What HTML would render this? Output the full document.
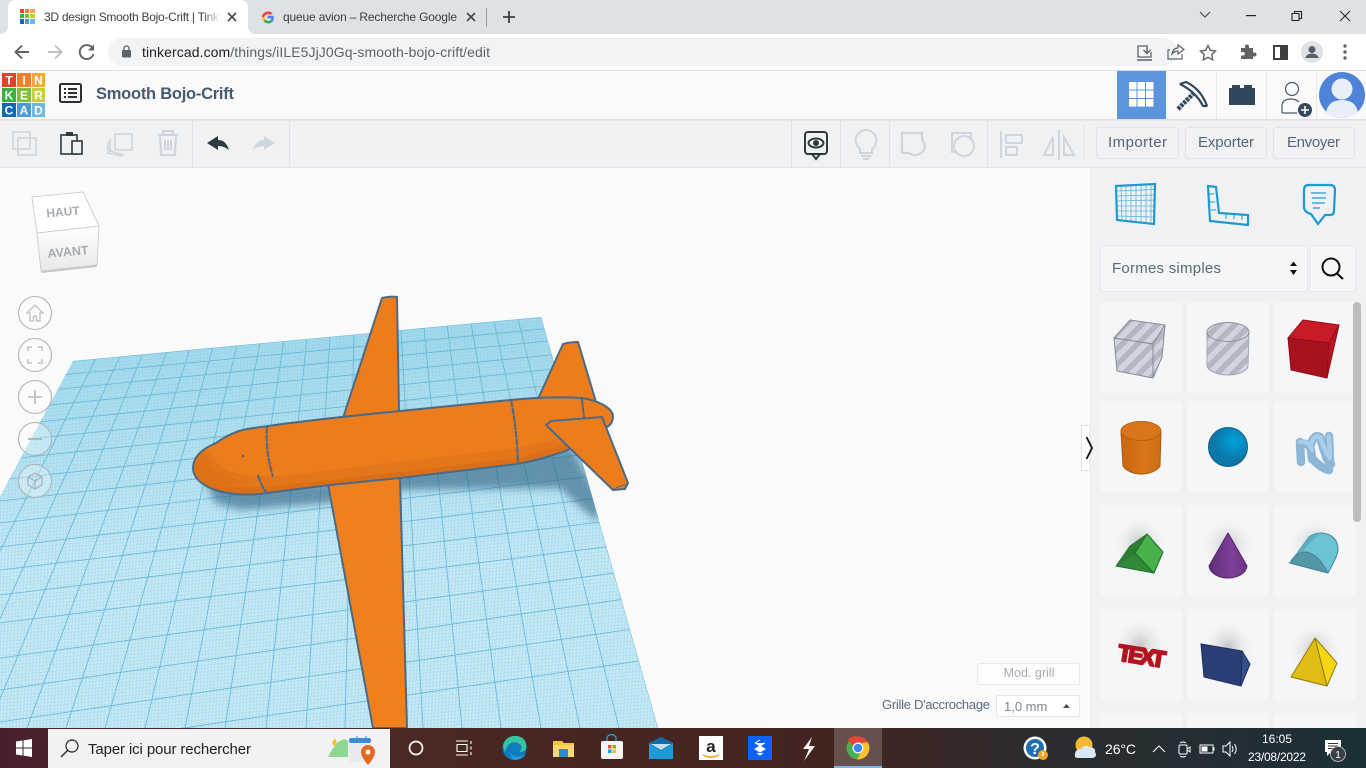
<!DOCTYPE html>
<html><head><meta charset="utf-8"><title>3D design Smooth Bojo-Crift | Tinkercad</title>
<style>
html,body{margin:0;padding:0;width:1366px;height:768px;overflow:hidden;background:#fafafa}
svg{display:block;font-family:"Liberation Sans",sans-serif}
</style></head><body>
<svg width="1366" height="768" viewBox="0 0 1366 768" xmlns="http://www.w3.org/2000/svg">
<defs>
<pattern id="fine" width="3.4" height="3.4" patternUnits="userSpaceOnUse" patternTransform="rotate(-5) skewX(-8)">
<rect width="3.4" height="3.4" fill="#c6e9f5"/><path d="M0 0H3.4M0 0V3.4" stroke="#a2d9ec" stroke-width="1"/></pattern>
<pattern id="stripe" width="11" height="11" patternUnits="userSpaceOnUse" patternTransform="rotate(45)">
<rect width="11" height="11" fill="#d0d4e0"/><rect width="5.5" height="11" fill="#b2b7c3"/></pattern>
<clipPath id="gridclip"><polygon points="73,361 541,317 658,728 -125,728"/></clipPath>
<clipPath id="bodyclip"><path d="M193 468C193 456 204 448 216 443C226 436 236 431 247 429C300 421 350 416 400 411L510 400C540 397 565 397 582 398C600 401 612 408 613 416C613 422 610 426 605 428L566 451C550 456 535 461 517 464L400 478L330 485L267 493C255 495 245 495 236 494C212 492 193 482 193 468Z"/></clipPath>
<filter id="b5" x="-30%" y="-30%" width="160%" height="160%"><feGaussianBlur stdDeviation="4"/></filter>
<linearGradient id="fade"><stop offset="0" stop-color="#fff" stop-opacity="0"/><stop offset=".8" stop-color="#fff"/></linearGradient>
<linearGradient id="tb"><stop offset="0" stop-color="#4a1f2c"/><stop offset=".3" stop-color="#4a2823"/><stop offset=".62" stop-color="#42241f"/><stop offset=".75" stop-color="#2d2c2e"/><stop offset="1" stop-color="#1b3037"/></linearGradient>
<linearGradient id="far" gradientUnits="userSpaceOnUse" x1="0" y1="320" x2="0" y2="560"><stop offset="0" stop-color="#7cc6e2" stop-opacity=".5"/><stop offset="1" stop-color="#7cc6e2" stop-opacity="0"/></linearGradient>
<linearGradient id="cyl"><stop offset="0" stop-color="#c9660f"/><stop offset=".6" stop-color="#d9751a"/><stop offset="1" stop-color="#cf6d14"/></linearGradient>
<linearGradient id="cone"><stop offset="0" stop-color="#5f2c79"/><stop offset=".6" stop-color="#7f3f98"/><stop offset="1" stop-color="#6c3385"/></linearGradient>
<linearGradient id="cubef" x1="0" y1="0" x2="0" y2="1"><stop offset="0" stop-color="#fff"/><stop offset="1" stop-color="#e8e8e8"/></linearGradient>
<radialGradient id="sph" cx=".65" cy=".35"><stop offset="0" stop-color="#00a4dc"/><stop offset="1" stop-color="#0b76a8"/></radialGradient>
<radialGradient id="glow"><stop offset="0" stop-color="#c2c4c6"/><stop offset="1" stop-color="#f5f6f8" stop-opacity="0"/></radialGradient>
</defs>

<!-- Canvas -->
<rect width="1366" height="768" fill="#fafafa"/>
<polygon points="73,361 541,317 658,728 -125,728" fill="url(#fine)"/>
<polygon points="73,361 541,317 658,728 -125,728" fill="url(#far)"/>
<g clip-path="url(#gridclip)">
<path fill="none" stroke="#68b8d6" stroke-width=".85" d="M541 317L658 728M518 319L619 728M494 321L580 728M471 323L541 728M447 325L501 728M424 328L462 728M401 330L423 728M377 332L384 728M354 334L345 728M330 336L306 728M307 338L266 728M284 340L225 728M260 343L185 728M237 345L145 728M213 347L105 728M190 349L66 728M167 351L27 728M143 353L-12 728M120 356L-50 728M96 358L-88 728
M0 368L700 302M0 381L700 314M0 395L700 326M0 410L700 340M0 426L700 354M0 442L700 370M0 460L700 386M0 480L700 403M0 501L700 422M0 523L700 441M0 547L700 463M0 570L700 486M0 595L700 510M0 623L700 535M0 658L700 561M0 690L700 588M0 722L700 619M0 755L700 652"/>
<polygon points="205,480 330,484 400,472 520,455 572,448 600,500 597,522 560,488 400,490 330,503 240,510 215,503" fill="#2f5f80" opacity=".6" filter="url(#b5)"/>
</g>

<!-- Plane -->
<g stroke="#4a6a85" stroke-width="2" stroke-linejoin="round">
<path d="M343 418L382 298Q390 296 397 297L399 412Z" fill="#ed7d1c"/>
<path d="M538 399L563 344Q570 342 578 342L596 402Z" fill="#ed7d1c"/>
<path d="M328 484Q365 479 400 478L407 728H373Z" fill="#ee801e"/>
</g>
<g clip-path="url(#bodyclip)">
<rect x="180" y="390" width="440" height="110" fill="#ed7d1c"/>
<path d="M180 440L211 452C214 463 225 471 242 474C255 477 268 477 290 475L517 448L570 436L620 430V500H180Z" fill="#e3761a"/>
<path d="M180 470C200 492 240 486 270 487L520 458L620 428V500H180Z" fill="#d96f18"/>
<path d="M180 440L207 452C207 468 222 478 250 482L180 490Z" fill="#dd7218"/>
</g>
<g stroke="#4a6a85" stroke-width="2" stroke-linejoin="round">
<path d="M193 468C193 456 204 448 216 443C226 436 236 431 247 429C300 421 350 416 400 411L510 400C540 397 565 397 582 398C600 401 612 408 613 416C613 422 610 426 605 428L566 451C550 456 535 461 517 464L400 478L330 485L267 493C255 495 245 495 236 494C212 492 193 482 193 468Z" fill="none"/>
<path d="M546 425L551 421L602 417L628 483L625 489L613 490Z" fill="#ed7d1c"/>
<path d="M613 490Q618 486 628 484" fill="none" stroke-width="1"/>
<path d="M267 427Q265 450 273 477M258 475Q261 486 267 493M511 400Q517 430 518 464M582 399L584 418" fill="none" stroke-dasharray="7 .8"/>
</g>
<circle cx="243" cy="456" r="1.3" fill="#4a6a85"/>

<!-- Chrome tab strip -->
<rect width="1366" height="34" fill="#dee1e6"/>
<path d="M0 34Q8 34 8 26V8Q8 0 16 0H240Q248 0 248 8V26Q248 34 256 34Z" fill="#fff"/>
<g>
<rect x="20" y="9" width="4" height="4" fill="#e5402a"/><rect x="25" y="9" width="4" height="4" fill="#f47e2a"/><rect x="30" y="9" width="5" height="4" fill="#f7a443"/>
<rect x="20" y="14" width="4" height="4" fill="#3eae3f"/><rect x="25" y="14" width="4" height="4" fill="#7dbe3d"/><rect x="30" y="14" width="5" height="4" fill="#c5cf3a"/>
<rect x="20" y="19" width="4" height="5" fill="#0c6bb3"/><rect x="25" y="19" width="4" height="5" fill="#4a9bd4"/><rect x="30" y="19" width="5" height="5" fill="#6eb7e0"/>
</g>
<text x="44" y="21" font-size="12" fill="#3c4043" textLength="175">3D design Smooth Bojo-Crift | Tink</text>
<rect x="203" y="6" width="22" height="22" fill="url(#fade)"/>
<path d="M228 13L236 21M236 13L228 21" stroke="#45494e" stroke-width="1.6"/>
<g fill="none" stroke-width="2.6">
<path d="M271.6 14A5.4 5.4 0 0 0 263 17" stroke="#ea4335"/>
<path d="M263 17A5.4 5.4 0 0 0 265 20.5" stroke="#fbbc05"/>
<path d="M264.5 20.5A5.4 5.4 0 0 0 271 21.5" stroke="#34a853"/>
<path d="M271 21.5A5.4 5.4 0 0 0 272.4 17H267.5" stroke="#4285f4"/>
</g>
<text x="283" y="21" font-size="12" fill="#3c4043" textLength="174">queue avion – Recherche Google</text>
<path d="M467 13L475 21M475 13L467 21" stroke="#45494e" stroke-width="1.6"/>
<rect x="486" y="8" width="1" height="19" fill="#9aa0a6"/>
<path d="M509 11V23M503 17H515" stroke="#3c4043" stroke-width="1.8"/>
<path d="M1200 12L1205 17L1210 12" fill="none" stroke="#3c4043" stroke-width="1"/>
<rect x="1246" y="15" width="10" height="1.2" fill="#222"/>
<path d="M1292 13.5h7v7h-7zM1294.5 13.5v-2h7v7h-2.5" fill="none" stroke="#222" stroke-width="1.1"/>
<path d="M1340 11L1350 21M1350 11L1340 21" stroke="#222" stroke-width="1"/>

<!-- Chrome address bar -->
<rect y="34" width="1366" height="36" fill="#fff"/>
<rect y="70" width="1366" height="1" fill="#dadce0"/>
<path d="M29 52H16M22 45.5L15.5 52L22 58.5" fill="none" stroke="#5f6368" stroke-width="1.9"/>
<path d="M48 52H61M55 45.5L61.5 52L55 58.5" fill="none" stroke="#bcbfc3" stroke-width="1.9"/>
<path d="M92.5 48A7 7 0 1 0 93.5 54" fill="none" stroke="#5f6368" stroke-width="1.9"/><path d="M94 44.5V50.5H88Z" fill="#5f6368"/>
<rect x="108" y="38" width="1070" height="28" rx="14" fill="#f1f3f4"/>
<rect x="122" y="50" width="9" height="7.5" rx="1" fill="#5f6368"/><path d="M124 50.5V48.5a2.5 2.5 0 0 1 5 0V50.5" fill="none" stroke="#5f6368" stroke-width="1.3"/>
<text x="142" y="57" font-size="14" fill="#5f6368" textLength="348"><tspan fill="#202124">tinkercad.com</tspan>/things/iILE5JjJ0Gq-smooth-bojo-crift/edit</text>
<path d="M1146 46H1138V57H1151V52" fill="none" stroke="#5f6368" stroke-width="1.3"/><path d="M1147 45V53M1143.5 50L1147 53.5L1150.5 50M1137 60H1152" fill="none" stroke="#5f6368" stroke-width="1.4"/>
<path d="M1170 50H1168V59H1182V54M1172 54Q1173 48 1178 48V45L1184 49.5L1178 54V51Q1174.5 51 1172 54Z" fill="none" stroke="#5f6368" stroke-width="1.2"/>
<path d="M1208 45.5L1210.3 50.2L1215.5 51L1211.8 54.6L1212.7 59.8L1208 57.3L1203.3 59.8L1204.2 54.6L1200.5 51L1205.7 50.2Z" fill="none" stroke="#5f6368" stroke-width="1.4"/>
<path d="M1241 48H1245V46.5a2 2 0 0 1 4 0V48H1253V52.5H1254.5a2 2 0 0 1 0 4H1253V59H1241V55.5H1243a1.7 1.7 0 0 0 0-3.5H1241Z" fill="#5f6368"/>
<rect x="1274" y="46" width="13" height="13" fill="none" stroke="#3c4043" stroke-width="2"/><rect x="1280" y="46" width="7" height="13" fill="#3c4043"/>
<circle cx="1312" cy="52" r="11" fill="#dfe1e5"/><circle cx="1312" cy="49.5" r="3.5" fill="#555e6e"/><path d="M1305.5 58a6.5 4.5 0 0 1 13 0Z" fill="#555e6e"/>
<g fill="#5f6368"><circle cx="1345" cy="46" r="1.7"/><circle cx="1345" cy="52" r="1.7"/><circle cx="1345" cy="58" r="1.7"/></g>

<!-- Tinkercad header -->
<rect y="71" width="1366" height="49" fill="#fafafa"/>
<rect y="119" width="1366" height="1.5" fill="#dfe0e2"/>
<g>
<rect x="2" y="73" width="14" height="14" fill="#e5402a"/><rect x="17" y="73" width="14" height="14" fill="#f47e2a"/><rect x="32" y="73" width="13" height="14" fill="#f7a443"/>
<rect x="2" y="88" width="14" height="14" fill="#3eae3f"/><rect x="17" y="88" width="14" height="14" fill="#7dbe3d"/><rect x="32" y="88" width="13" height="14" fill="#c5cf3a"/>
<rect x="2" y="103" width="14" height="14" fill="#0c6bb3"/><rect x="17" y="103" width="14" height="14" fill="#4a9bd4"/><rect x="32" y="103" width="13" height="14" fill="#6eb7e0"/>
<g font-size="12" font-weight="700" fill="#fff" text-anchor="middle">
<text x="9" y="84.5">T</text><text x="24" y="84.5">I</text><text x="38.5" y="84.5">N</text>
<text x="9" y="99.5">K</text><text x="24" y="99.5">E</text><text x="38.5" y="99.5">R</text>
<text x="9" y="114.5">C</text><text x="24" y="114.5">A</text><text x="38.5" y="114.5">D</text></g>
</g>
<rect x="60" y="84" width="21" height="18" rx="1.5" fill="none" stroke="#2b2f33" stroke-width="2"/>
<path d="M64 89h2M68 89h9M64 93h2M68 93h9M64 97h2M68 97h9" stroke="#2b2f33" stroke-width="2"/>
<text x="96" y="99" font-size="16.5" font-weight="700" fill="#465a70" textLength="138">Smooth Bojo-Crift</text>
<rect x="1117" y="71" width="49" height="48" fill="#5c95dc"/>
<g fill="#fff"><rect x="1129" y="82" width="7.5" height="7.5"/><rect x="1137.5" y="82" width="7.5" height="7.5"/><rect x="1146" y="82" width="7.5" height="7.5"/><rect x="1129" y="90.5" width="7.5" height="7.5"/><rect x="1137.5" y="90.5" width="7.5" height="7.5"/><rect x="1146" y="90.5" width="7.5" height="7.5"/><rect x="1129" y="99" width="7.5" height="7.5"/><rect x="1137.5" y="99" width="7.5" height="7.5"/><rect x="1146" y="99" width="7.5" height="7.5"/></g>
<path d="M1216.500 72V119M1266.500 72V119M1316.500 72V119" stroke="#e6e7e9" stroke-width="1"/>
<!-- pickaxe -->
<path d="M1178 109L1197 90" stroke="#33475c" stroke-width="4.500" stroke-dasharray="3 1"/>
<path d="M1180 84L1186 82Q1201 89 1207 106H1203Q1196 92 1180 84Z" fill="#fff" stroke="#33475c" stroke-width="2.200" stroke-linejoin="bevel"/>
<path d="M1229 88H1232V85H1240V88H1244V85H1252V88H1255V105H1229Z" fill="#33475c"/>
<circle cx="1292" cy="89" r="6.500" fill="none" stroke="#4b5866" stroke-width="1.200"/>
<path d="M1282 113V106Q1282 99 1291 99Q1296 99 1299 102M1282 113H1297" fill="none" stroke="#4b5866" stroke-width="1.200"/>
<circle cx="1305" cy="110" r="7" fill="#33475c"/><path d="M1305 106V114M1301 110H1309" stroke="#fff" stroke-width="1.600"/>
<circle cx="1342" cy="95" r="23" fill="#4f83d8"/><circle cx="1342" cy="89" r="10.500" fill="#e9effa"/><path d="M1326 113Q1328 100 1342 100Q1356 100 1358 113Q1351 118 1342 118Q1332 118 1326 113Z" fill="#e9effa"/>

<!-- Toolbar -->
<rect y="120.500" width="1366" height="47" fill="#f0f1f3"/>
<rect y="167" width="1366" height="1" fill="#e2e3e6"/>
<path d="M192.500 120V167M289.500 120V167M791.500 120V167M840.500 120V167M889.500 120V167M987.500 120V167M1084 125V160" stroke="#e1e3e6"/>
<g fill="none" stroke="#cdd6df" stroke-width="1.600">
<rect x="13" y="132" width="17" height="17"/><rect x="18" y="138" width="18" height="17"/>
<path d="M110 139V151L124 155M115 151V134H132V150H115"/><path d="M108 142V153L122 156"/>
<path d="M158 135H178M163 135V131H173V135M160 135L161 155H175L176 135M165 140V150M168 140V150M171 140V150" stroke-width="2"/>
<path d="M1001 131V158M1006 135H1022V143H1006ZM1006 147H1017V155H1006Z" stroke-width="2"/>
<path d="M1059 130V160M1053 137V155H1044ZM1064 137V155H1074Z" stroke-width="2"/>
<path d="M866 130a10.500 10.500 0 0 1 6 19V153H860V149a10.500 10.500 0 0 1 6-19ZM861 156H871M863 159H869" stroke-width="2"/>
<path d="M902 133H922Q921 139 925 145A10 10 0 0 1 909 153H902Z" stroke-width="2.200"/>
<rect x="952" y="133" width="19" height="19" stroke-width="2"/><circle cx="964" cy="146" r="10" stroke-width="2" fill="#f0f1f3"/>
</g>
<g fill="none" stroke="#2b3a3f" stroke-width="1.600"><rect x="61" y="135" width="16" height="19"/><rect x="72" y="141" width="10" height="13" fill="#f0f1f3"/></g>
<rect x="66" y="132" width="7" height="4" fill="#2b3a3f"/>
<path id="undo" d="M207 143L218 136V140Q226 140 229 150Q224 146 218 146V150Z" fill="#2b3a3f"/>
<path d="M207 143L218 136V140Q226 140 229 150Q224 146 218 146V150Z" fill="#cfd8e0" transform="translate(482 0) scale(-1 1)"/>
<rect x="805" y="132" width="22" height="22" rx="3" fill="none" stroke="#2b3a3f" stroke-width="2"/>
<path d="M812 154L816 159L820 154" fill="none" stroke="#2b3a3f" stroke-width="2"/>
<ellipse cx="816" cy="143" rx="7.500" ry="4.500" fill="none" stroke="#2b3a3f" stroke-width="2"/><circle cx="816" cy="143" r="3" fill="#2b3a3f"/>
<g fill="#f0f1f3" stroke="#e1e3e6"><rect x="1096.500" y="127.500" width="82" height="31" rx="3"/><rect x="1185.500" y="127.500" width="81" height="31" rx="3"/><rect x="1273.500" y="127.500" width="81" height="31" rx="3"/></g>
<g font-size="15" fill="#52647a"><text x="1108" y="147" textLength="59">Importer</text><text x="1198" y="147" textLength="56">Exporter</text><text x="1287" y="147" textLength="53">Envoyer</text></g>

<!-- Nav cube -->
<path d="M37 233L99 226L97 265L41 271Z" fill="url(#cubef)" stroke="#d0d0d0"/>
<path d="M32 197L83 192L99 226L37 233Z" fill="#fff" stroke="#d0d0d0"/>
<path d="M41 271L97 265L97 267L42 273Z" fill="#c8c8c8"/>
<text x="63" y="216" font-size="12" font-weight="700" fill="#a7abb2" text-anchor="middle" transform="rotate(-5 63 212)">HAUT</text>
<text x="68" y="256" font-size="12.500" font-weight="700" fill="#a7abb2" text-anchor="middle" transform="rotate(-5 68 252)">AVANT</text>
<g fill="#fff" fill-opacity=".3" stroke="#b0b3b6" stroke-width="1.100"><circle cx="35" cy="313" r="16.500"/><circle cx="35" cy="355" r="16.500"/><circle cx="35" cy="397" r="16.500"/><circle cx="35" cy="439" r="16.500"/><circle cx="35" cy="481" r="16.500"/></g>
<g fill="none" stroke="#bfc1c4" stroke-width="1.300">
<path d="M27 313L35 305L43 313H40V321H36.500V316H33.500V321H30V313Z"/>
<path d="M28 351V347H32M38 347H42V351M42 359V363H38M32 363H28V359" stroke-width="1.500"/>
<path d="M35 390V404M28 397H42" stroke-width="1.800"/>
<path d="M28 439H42" stroke-width="1.800" stroke="#a9b4ba"/>
<path d="M35 473L42 477V485L35 489L28 485V477ZM28 477L35 481L42 477M35 481V489" stroke="#a9b4ba"/>
</g>

<!-- Grid controls -->
<rect x="977.500" y="663.500" width="102" height="21" rx="2" fill="#fdfdfd" stroke="#e8e9ec"/>
<text x="1029" y="677" font-size="12.500" fill="#a5acb4" text-anchor="middle">Mod. grill</text>
<text x="882" y="709" font-size="13" fill="#5b6b7c" textLength="108">Grille D'accrochage</text>
<rect x="996.500" y="695.500" width="83" height="21" rx="2" fill="#fff" stroke="#e3e5e8"/>
<text x="1004" y="711" font-size="13" fill="#7b8793">1,0 mm</text>
<path d="M1063 708L1066.500 704L1070 708Z" fill="#4a4f55"/>

<!-- Right panel -->
<rect x="1090" y="168" width="276" height="560" fill="#f0f1f3"/>
<path d="M1081.500 425.500H1090V470.500H1081.500Z" fill="#fff" stroke="#dfe1e4"/>
<path d="M1086.500 437L1092 448L1086.500 459" stroke="#111" stroke-width="1.800" fill="none"/>
<!-- top icons -->
<g fill="none" stroke="#1e9ad0">
<path d="M1116 186L1155 184L1154 224L1117 220Z" stroke-width="2.200"/>
<path d="M1116 191L1155 189.500M1116 196L1155 195M1116 201L1155 200M1116 206L1155 206M1116 211L1155 211M1117 216L1155 217M1121 185.500L1122 221M1126 185.500L1126 221M1131 185L1131 222M1136 185L1136 222M1141 185L1141 222M1146 184.500L1146 223M1151 184.500L1151 223" stroke-width=".8" opacity=".7"/>
<path d="M1208 186L1216 187L1219 213L1248 215L1248 225L1210 221Z" stroke-width="2.200"/>
<path d="M1209 194H1214M1210 202H1215M1211 210H1216M1226 214V219M1234 215V219M1242 215V220" stroke-width="1"/>
<path d="M1309 185H1330Q1335 185 1335 190L1334 211Q1334 215 1330 215H1325L1318 224L1311 214Q1304 212 1304 207V190Q1304 185 1309 185Z" stroke-width="2.200"/>
<path d="M1311 193H1326M1312 198H1326M1312 203H1325M1313 208H1320" stroke-width="1.300"/>
</g>
<!-- dropdown -->
<rect x="1100.500" y="245.500" width="207" height="46" rx="2" fill="#f5f6f8" stroke="#e6e7ea"/>
<text x="1112" y="273" font-size="15" fill="#57687c" textLength="109">Formes simples</text>
<path d="M1290 266L1293.500 261.500L1297 266ZM1290 270L1293.500 275L1297 270Z" fill="#111"/>
<rect x="1310" y="245.500" width="45.500" height="46" rx="2" fill="#f5f6f8" stroke="#e6e7ea"/>
<circle cx="1331" cy="267" r="8.500" fill="none" stroke="#111" stroke-width="2"/><path d="M1337 273.500L1343 279" stroke="#111" stroke-width="2.200"/>
<!-- cards -->
<g fill="#f5f6f8">
<rect x="1100" y="302" width="82" height="91" rx="3"/><rect x="1187" y="302" width="82" height="91" rx="3"/><rect x="1274" y="302" width="82" height="91" rx="3"/>
<rect x="1100" y="401" width="82" height="91" rx="3"/><rect x="1187" y="401" width="82" height="91" rx="3"/><rect x="1274" y="401" width="82" height="91" rx="3"/>
<rect x="1100" y="505" width="82" height="92" rx="3"/><rect x="1187" y="505" width="82" height="92" rx="3"/><rect x="1274" y="505" width="82" height="92" rx="3"/>
<rect x="1100" y="609" width="82" height="92" rx="3"/><rect x="1187" y="609" width="82" height="92" rx="3"/><rect x="1274" y="609" width="82" height="92" rx="3"/>
<rect x="1100" y="713" width="82" height="20" rx="3"/><rect x="1187" y="713" width="82" height="20" rx="3"/><rect x="1274" y="713" width="82" height="20" rx="3"/>
</g>
<rect x="1353" y="302" width="8" height="220" rx="4" fill="#bdbdbd"/>
<g fill="url(#glow)"><circle cx="1140" cy="543" r="28"/><circle cx="1228" cy="545" r="28"/><circle cx="1315" cy="545" r="28"/><circle cx="1140" cy="645" r="28"/><circle cx="1228" cy="647" r="28"/><circle cx="1315" cy="650" r="28"/><circle cx="1228" cy="445" r="26" opacity=".5"/></g>
<!-- gray cube -->
<g stroke="#888b92" stroke-width="1" stroke-linejoin="round">
<path d="M1114 338L1130 320L1165 325L1153 344Z" fill="url(#stripe)"/>
<path d="M1114 338L1153 344L1153 378L1117 371Z" fill="url(#stripe)"/>
<path d="M1165 325L1162 357L1153 378L1153 344Z" fill="url(#stripe)"/>
</g>
<!-- gray cylinder -->
<path d="M1207 332V366C1208 371 1218 375 1228 375C1238 375 1248 371 1248 366L1249 332Z" fill="url(#stripe)" stroke="#a5a8af"/>
<ellipse cx="1228" cy="332" rx="21" ry="9.500" fill="url(#stripe)" stroke="#8e9198"/>
<!-- red cube -->
<path d="M1288 338L1303 320L1339 325L1329 343Z" fill="#c91a28" stroke="#8f0f1a" stroke-linejoin="round"/>
<path d="M1288 338L1329 343L1327 378L1291 370Z" fill="#a8121f" stroke="#8f0f1a"/>
<path d="M1339 325L1327 378L1329 343Z" fill="#bb1523" stroke="#8f0f1a"/>
<!-- orange cylinder -->
<path d="M1121 432L1123 466C1126 471 1134 474 1141 474C1149 474 1157 471 1160 466L1161 432Z" fill="url(#cyl)" stroke="#a85a10"/>
<ellipse cx="1141" cy="431" rx="20" ry="9.500" fill="#d9751a" stroke="#b5620f"/>
<!-- sphere -->
<circle cx="1228" cy="447" r="19.500" fill="url(#sph)" stroke="#0d5f88"/>
<!-- scribble -->
<g fill="none" stroke-linecap="round" stroke-linejoin="round">
<path d="M1300 442L1301 462M1301 444Q1309 442 1311 450L1312 459M1312 458Q1320 468 1329 470M1311 444Q1314 434 1320 437Q1323 448 1327 459L1331 464M1329 436L1330 460" stroke="#8db5d6" stroke-width="8.500"/>
<path d="M1300 442Q1309 441 1312 450M1311 444Q1314 434 1320 437Q1323 446 1328 456M1329 436L1330 458" stroke="#a9cce8" stroke-width="4.500"/>
</g>
<!-- roof -->
<path d="M1116 566L1135 553L1154 573Z" fill="#2f8a37" stroke="#1f6a28" stroke-linejoin="round"/>
<path d="M1116 566L1130 546L1147 534L1135 553Z" fill="#2f7c34" stroke="#2f7c34" stroke-linejoin="round"/>
<path d="M1135 553L1147 534L1163 552L1154 573Z" fill="#47b24c" stroke="#1f6a28" stroke-linejoin="round"/>
<!-- cone -->
<path d="M1228 533L1209 566C1210 574 1220 578 1228 578C1237 578 1246 574 1247 566Z" fill="url(#cone)" stroke="#4f2363" stroke-linejoin="round"/>
<!-- half cylinder -->
<path d="M1290 563L1309 537Q1314 533 1322 533Q1338 535 1338 550Q1338 555 1328 573Z" fill="#6cc3d3" stroke="#3f8595" stroke-linejoin="round"/>
<path d="M1290 563L1309 537Q1314 533 1322 533Q1310 540 1303 552Z" fill="#5dafc0"/>
<path d="M1290 563Q1295 553 1305 552Q1318 553 1328 573Z" fill="#5597a6" stroke="#3f8595" stroke-linejoin="round"/>
<!-- TEXT -->
<text x="1118" y="664" font-size="23" font-weight="700" fill="#a8121f" stroke="#b8141f" stroke-width="2" stroke-linejoin="round" textLength="48" transform="rotate(9 1142 655)">TEXT</text>
<!-- polygon -->
<path d="M1201 644L1242 651L1241 686L1204 677Z" fill="#2a3d75" stroke="#1f2f5f" stroke-linejoin="round"/>
<path d="M1242 651L1250 664L1241 686Z" fill="#34508a" stroke="#1f2f5f" stroke-linejoin="round"/>
<!-- pyramid -->
<path d="M1315 638L1291 677L1327 686Z" fill="#e0bd14" stroke="#8f7a0a" stroke-linejoin="round"/>
<path d="M1315 638L1337 663L1327 686Z" fill="#f6d613" stroke="#8f7a0a" stroke-linejoin="round"/>

<!-- Taskbar -->
<rect y="728" width="1366" height="40" fill="url(#tb)"/>
<path d="M16 741.500L22.500 740.500V747.500H16ZM23.500 740.400L32 739V747.500H23.500ZM16 748.500H22.500V755.500L16 754.500ZM23.500 748.500H32V757L23.500 755.600Z" fill="#fff"/>
<rect x="48" y="729" width="342" height="39" fill="#f2f2f2"/>
<circle cx="72" cy="746" r="6" fill="none" stroke="#222" stroke-width="1.200"/><path d="M67.500 750.500L61 757" stroke="#222" stroke-width="1.300"/>
<text x="88" y="754" font-size="15" fill="#222" textLength="163">Taper ici pour rechercher</text>
<path d="M328 757Q340 734 348 741V757Z" fill="#8fd68f"/>
<path d="M335 738L337 743L335 747L332 743Z" fill="#f5c518"/>
<rect x="349" y="740" width="20" height="22" rx="2" fill="#e8eaed"/><rect x="349" y="738" width="22" height="5" rx="2" fill="#3f8bd6"/>
<path d="M357 736V740M366 736V740" stroke="#3f8bd6" stroke-width="1"/>
<path d="M368 765Q361 757 361 752A7 7 0 0 1 375 752Q375 757 368 765Z" fill="#e8681f"/><circle cx="368" cy="752" r="2.500" fill="#fff"/>
<circle cx="416" cy="748" r="6.500" fill="none" stroke="#fff" stroke-width="1.700"/>
<path d="M456 741H468M456 755H468M457 744.500H467V751.500H457ZM471 741V744M471 746.500V749.500M471 752V755" fill="none" stroke="#fff" stroke-width="1.100"/>
<circle cx="514.500" cy="748" r="12" fill="#0f7cc0"/><path d="M503 746Q505 736 515 736Q526 736 526.500 747Q526 752 519 752Q525 747 518 743Q508 740 505 752Z" fill="#36c5a0"/><path d="M510 752Q515 760 526 754Q520 762 512 759Z" fill="#1f9ae0"/>
<path d="M553 741H562L564 743H574V757H553Z" fill="#f4c542"/><rect x="553" y="745" width="21" height="12" fill="#f8d775"/><rect x="559" y="749" width="9" height="8" fill="#2a8dd4"/>
<rect x="601" y="741" width="22" height="18" rx="2" fill="#f5f5f5"/><path d="M607 741V738a4 3 0 0 1 9 0V741" fill="none" stroke="#1aa3e0" stroke-width="1.300"/>
<rect x="608" y="745" width="3.500" height="3.500" fill="#e8502a"/><rect x="612.500" y="745" width="3.500" height="3.500" fill="#7fba00"/><rect x="608" y="749.500" width="3.500" height="3.500" fill="#00a4ef"/><rect x="612.500" y="749.500" width="3.500" height="3.500" fill="#ffb900"/>
<rect x="649" y="743" width="24" height="16" fill="#1d9ad6"/><path d="M649 743L661 737L673 743L661 751Z" fill="#0f6cb0"/><path d="M651 744L661 750L671 744" fill="#bfe3f5"/>
<rect x="699" y="736" width="24" height="24" fill="#fff"/><text x="711" y="752" font-size="17" font-weight="700" fill="#222" text-anchor="middle">a</text><path d="M703 755Q711 759 719 755" fill="none" stroke="#f79c1d" stroke-width="1.500"/>
<rect x="748" y="736" width="24" height="24" fill="#0d61fe"/><path d="M755 743L760 746L755 749L760 752L765 749L760 746L765 743M755 743L760 740M757 753L760 755L763 753" fill="#fff" stroke="#fff" stroke-width="1"/>
<path d="M812 737L803 749L809 749L804 761L815 746L809 746Z" fill="#f5f5f5"/>
<rect x="834" y="728" width="48" height="40" fill="#fff" fill-opacity=".2"/><rect x="834" y="766" width="48" height="2" fill="#76b9ed"/>
<circle cx="858" cy="748" r="11.500" fill="#4caf50"/><path d="M858 736.500A11.500 11.500 0 0 1 868 742.500H858A5.500 5.500 0 0 0 852.500 746L848 739.500A11.500 11.500 0 0 1 858 736.500Z" fill="#ea4335"/><path d="M868 742.500A11.500 11.500 0 0 1 857 759.500L862 750Q864 746 862 742.500Z" fill="#fbc02d"/><circle cx="858" cy="748" r="5.500" fill="#fff"/><circle cx="858" cy="748" r="4.300" fill="#4285f4"/>
<circle cx="1035" cy="748" r="11.500" fill="#fff"/><circle cx="1035" cy="748" r="9" fill="#1b6fb5"/><text x="1035" y="754" font-size="16" font-weight="700" fill="#fff" text-anchor="middle">?</text><circle cx="1043" cy="755" r="5" fill="#f5a623"/><rect x="1042.300" y="752" width="1.400" height="4" fill="#fff"/>
<circle cx="1084" cy="745" r="8.500" fill="#f7b733"/><path d="M1075 757Q1074 749 1081 749Q1084 744 1090 747Q1096 748 1095 752Q1098 757 1092 758H1079Q1076 758 1075 757Z" fill="#dbe7f3"/>
<text x="1105" y="754" font-size="14" fill="#fff" textLength="31">26°C</text>
<path d="M1153 752L1159 746L1165 752" fill="none" stroke="#fff" stroke-width="1.100"/>
<rect x="1179" y="745" width="8" height="9" rx="1" fill="none" stroke="#fff"/><path d="M1187 749L1190 747V752L1187 750M1180 743Q1183 741 1186 743M1180 756Q1183 758 1186 756" fill="none" stroke="#fff"/>
<rect x="1200" y="745" width="13" height="8" fill="none" stroke="#fff"/><rect x="1201.500" y="746.500" width="6" height="5" fill="#fff"/><rect x="1213" y="747.500" width="1.500" height="3" fill="#fff"/>
<path d="M1223 746H1226L1230 742V756L1226 752H1223ZM1232 746Q1234 749 1232 752M1234.500 744Q1238 749 1234.500 754" fill="none" stroke="#fff"/>
<text x="1277" y="743" font-size="12" fill="#fff" text-anchor="middle">16:05</text>
<text x="1277" y="761" font-size="12" fill="#fff" text-anchor="middle" textLength="58">23/08/2022</text>
<path d="M1325 740H1341V752H1331L1327 756V752H1325Z" fill="#fff"/><path d="M1328 743.500H1338M1328 746H1338M1328 748.500H1335" stroke="#333" stroke-width=".9"/>
<circle cx="1338" cy="754" r="7.500" fill="#3a3f44" stroke="#ccc" stroke-width=".8"/><text x="1338" y="758" font-size="10" fill="#fff" text-anchor="middle">1</text>
</svg>
</body></html>
